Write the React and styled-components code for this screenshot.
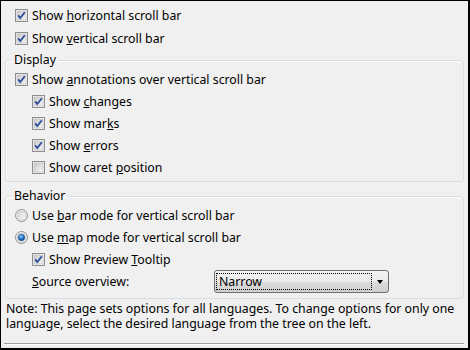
import React from 'react';
import styled, { createGlobalStyle } from 'styled-components';

const Global = createGlobalStyle`
  html, body { margin: 0; padding: 0; background: #f0f0f0; }
  body {
    font-family: "Noto Sans", "Liberation Sans", sans-serif;
    font-size: 12.3px;
    color: #000;
  }
`;

const Frame = styled.div`
  box-sizing: border-box;
  width: 470px;
  height: 350px;
  border-style: solid;
  border-color: #000;
  border-width: 1px 2px 2px 1px;
  background: #f0f0f0;
  display: flex;
  flex-direction: column;
  padding: 3px 4px 0 4px;
`;

const TopRows = styled.div`
  display: flex;
  flex-direction: column;
  padding-left: 10px;
`;

const Row = styled.div`
  display: flex;
  align-items: center;
  height: ${p => p.$h || 22}px;
  padding-left: ${p => (p.$indent ? 17 : 0)}px;
  gap: 4px;
  white-space: nowrap;
`;

const Group = styled.fieldset`
  margin: ${p => p.$mt}px 0 0 0;
  padding: 0 0 ${p => p.$pb}px 0;
  border: 1px solid #d5dfe5;
  border-radius: 3px;
  box-shadow: inset 1px 1px 0 #ffffff;
  min-width: 0;
`;

const Legend = styled.legend`
  margin-left: 6px;
  padding: 0 2px;
  line-height: 16px;
  height: 16px;
`;

const GroupBody = styled.div`
  display: flex;
  flex-direction: column;
  padding-left: 9px;
`;

const U = styled.span`
  text-decoration: underline;
  text-underline-offset: 1px;
`;

const FieldLabel = styled.span`
  width: 178px;
  flex: none;
`;

const Combo = styled.div`
  box-sizing: border-box;
  width: 175px;
  height: 23px;
  border: 1px solid #707070;
  border-radius: 3px;
  background: linear-gradient(#f2f2f2 0%, #ebebeb 50%, #dddddd 50%, #cfcfcf 100%);
  display: flex;
  align-items: center;
  padding: 0 0 0 1px;
`;

const FocusText = styled.div`
  box-sizing: border-box;
  height: 17px;
  width: 156px;
  border: 1px dotted #000;
  display: flex;
  align-items: center;
  padding-left: 2px;
`;

const Arrow = styled.div`
  flex: 1;
  display: flex;
  align-items: center;
  justify-content: center;
  &::after {
    content: "";
    border-left: 3.5px solid transparent;
    border-right: 3.5px solid transparent;
    border-top: 4px solid #000;
  }
`;

const Note = styled.div`
  margin-top: 2px;
  padding-left: 1px;
  line-height: 15px;
  white-space: nowrap;
`;

const Separator = styled.div`
  margin: auto 0 3px -1px;
  width: 460px;
  height: 1px;
  background: #a0a0a0;
  border-bottom: 1px solid #ffffff;
`;

const BoxSvg = styled.svg`
  flex: none;
  display: block;
`;

function Check({ checked }) {
  return (
    <BoxSvg width="13" height="13" viewBox="0 0 13 13">
      <defs>
        <linearGradient id="cbg" x1="0" y1="0" x2="1" y2="1">
          <stop offset="0" stopColor="#c9c9c9" />
          <stop offset="1" stopColor="#f7f7f7" />
        </linearGradient>
      </defs>
      <rect x="0.5" y="0.5" width="12" height="12" fill="#f4f4f4" stroke="#8f8f8f" />
      <rect x="2" y="2" width="9" height="9" fill="url(#cbg)" stroke="#b9b9b9" strokeWidth="0.6" />
      {checked && (
        <path d="M3.2 6.4 L5.3 9 L9.8 3.3" fill="none" stroke="#2c4c9c" strokeWidth="1.8" strokeLinejoin="miter" />
      )}
    </BoxSvg>
  );
}

function Radio({ checked }) {
  return (
    <BoxSvg width="13" height="13" viewBox="0 0 13 13">
      <defs>
        <linearGradient id="rbg" x1="0" y1="0" x2="1" y2="1">
          <stop offset="0" stopColor="#cfcfcf" />
          <stop offset="1" stopColor="#fbfbfb" />
        </linearGradient>
        <radialGradient id="rdot" cx="0.4" cy="0.35" r="0.7">
          <stop offset="0" stopColor="#8fd6ff" />
          <stop offset="0.5" stopColor="#2d7fd0" />
          <stop offset="1" stopColor="#123f86" />
        </radialGradient>
      </defs>
      <circle cx="6.5" cy="6.5" r="6" fill="#f4f4f4" stroke="#8f8f8f" />
      <circle cx="6.5" cy="6.5" r="4.4" fill="url(#rbg)" stroke="#c0c0c0" strokeWidth="0.6" />
      {checked && <circle cx="6.5" cy="6.5" r="3.2" fill="url(#rdot)" stroke="#1b4a8a" strokeWidth="0.6" />}
    </BoxSvg>
  );
}

export default function App() {
  return (
    <>
      <Global />
      <Frame>
        <TopRows>
          <Row $h={23}><Check checked /><span>Show <U>h</U>orizontal scroll bar</span></Row>
          <Row $h={23}><Check checked /><span>Show <U>v</U>ertical scroll bar</span></Row>
        </TopRows>
        <Group $mt={2} $pb={3}>
          <Legend>Display</Legend>
          <GroupBody>
            <Row><Check checked /><span>Show <U>a</U>nnotations over vertical scroll bar</span></Row>
            <Row $indent><Check checked /><span>Show <U>c</U>hanges</span></Row>
            <Row $indent><Check checked /><span>Show mar<U>k</U>s</span></Row>
            <Row $indent><Check checked /><span>Show <U>e</U>rrors</span></Row>
            <Row $indent><Check /><span>Show caret <U>p</U>osition</span></Row>
          </GroupBody>
        </Group>
        <Group $mt={6} $pb={5}>
          <Legend>Behavior</Legend>
          <GroupBody>
            <Row><Radio /><span>Use <U>b</U>ar mode for vertical scroll bar</span></Row>
            <Row><Radio checked /><span>Use <U>m</U>ap mode for vertical scroll bar</span></Row>
            <Row $indent><Check checked /><span>Show Preview <U>T</U>ooltip</span></Row>
            <Row $indent $h={23}>
              <FieldLabel><U>S</U>ource overview:</FieldLabel>
              <Combo>
                <FocusText>Narrow</FocusText>
                <Arrow />
              </Combo>
            </Row>
          </GroupBody>
        </Group>
        <Note>
          Note: This page sets options for all languages. To change options for only one
          <br />
          language, select the desired language from the tree on the left.
        </Note>
        <Separator />
      </Frame>
    </>
  );
}
